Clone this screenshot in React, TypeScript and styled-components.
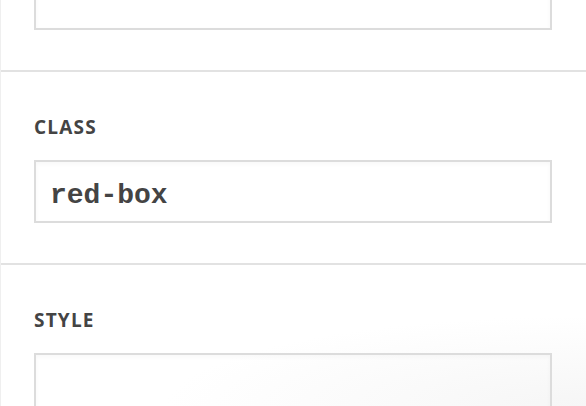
import styled, { createGlobalStyle } from 'styled-components'

const GlobalStyle = createGlobalStyle`
  html, body {
    margin: 0;
    padding: 0;
    height: 100%;
    overflow: hidden;
  }
  body {
    background: radial-gradient(ellipse 420px 90px at 100% 100%, #f6f6f6 0%, #fff 100%);
  }
`

type Field = {
  label?: string
  value: string
}

const fields: Field[] = [
  { value: '' },
  { label: 'Class', value: 'red-box' },
  { label: 'Style', value: '' },
]

export default function App() {
  return (
    <>
      <GlobalStyle />
      <Panel>
        {fields.map((f, i) => (
          <Section key={i} first={i === 0}>
            {f.label && <Label>{f.label}</Label>}
            <Input defaultValue={f.value} spellCheck={false} />
          </Section>
        ))}
      </Panel>
    </>
  )
}

const Panel = styled.div`
  display: flex;
  flex-direction: column;
  border-left: 1px solid #efefef;
  margin-top: -33px;
`

const Section = styled.div<{ first: boolean }>`
  display: flex;
  flex-direction: column;
  gap: 23px;
  padding: ${(p) => (p.first ? '0 34px 40px 33px' : '45px 34px 40px 33px')};
  border-top: ${(p) => (p.first ? 'none' : '2px solid #e2e2e2')};
`

const Label = styled.label`
  font-family: 'Open Sans', 'Noto Sans', sans-serif;
  font-weight: 700;
  font-size: 19px;
  line-height: 20px;
  letter-spacing: 1.2px;
  text-transform: uppercase;
  color: #444;
`

const Input = styled.input`
  box-sizing: border-box;
  width: 100%;
  height: 63px;
  margin: 0;
  padding: 18px 14px 11px;
  border: 2px solid #dcdcdc;
  border-radius: 0;
  background: transparent;
  box-shadow: inset 0 2px 4px rgba(0, 0, 0, 0.03);
  font-family: 'Liberation Mono', 'Courier New', monospace;
  font-weight: 700;
  font-size: 28px;
  line-height: 30px;
  color: #444;
  outline: none;
`
